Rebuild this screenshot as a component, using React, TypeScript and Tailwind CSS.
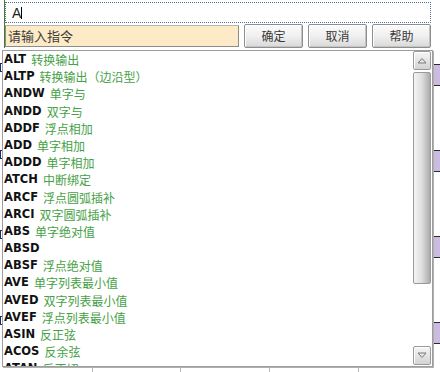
import React from "react";

const items: [string, string][] = [
  ["ALT", "转换输出"],
  ["ALTP", "转换输出（边沿型）"],
  ["ANDW", "单字与"],
  ["ANDD", "双字与"],
  ["ADDF", "浮点相加"],
  ["ADD", "单字相加"],
  ["ADDD", "单字相加"],
  ["ATCH", "中断绑定"],
  ["ARCF", "浮点圆弧插补"],
  ["ARCI", "双字圆弧插补"],
  ["ABS", "单字绝对值"],
  ["ABSD", ""],
  ["ABSF", "浮点绝对值"],
  ["AVE", "单字列表最小值"],
  ["AVED", "双字列表最小值"],
  ["AVEF", "浮点列表最小值"],
  ["ASIN", "反正弦"],
  ["ACOS", "反余弦"],
  ["ATAN", "反正切"],
];

function Btn({ label }: { label: string }) {
  return (
    <div className="w-[59px] h-[24px] flex items-center justify-center border border-[#8e8e8e] rounded-[2px] bg-linear-to-b from-[#fbfbfb] via-[#f0f0f0] to-[#d9d9d9] shadow-[inset_1px_1px_0_#ffffff,inset_-1px_-1px_0_#c4c4c4] text-[12px] text-[#3a3a3a] font-['Noto_Sans_CJK_SC',sans-serif]">
      {label}
    </div>
  );
}

function Arrow({ up }: { up: boolean }) {
  return (
    <div className="h-[19px] w-[18px] flex items-center justify-center border border-[#9a9a9a] rounded-[2px] bg-linear-to-b from-[#f6f6f6] to-[#d3d3d3] shadow-[inset_1px_1px_0_#ffffff]">
      <svg width="10" height="7" viewBox="0 0 10 7">
        {up ? (
          <polygon points="1,6 5,1.5 9,6" fill="#e6e6e6" stroke="#7a7a7a" strokeWidth="1" />
        ) : (
          <polygon points="1,1 5,5.5 9,1" fill="#e6e6e6" stroke="#7a7a7a" strokeWidth="1" />
        )}
      </svg>
    </div>
  );
}

export default function App() {
  return (
    <div className="w-[440px] h-[372px] bg-white flex overflow-hidden font-['Liberation_Sans',sans-serif]">
      {/* left edge marks */}
      <div className="w-[2px] flex flex-col shrink-0">
        <div className="mt-[63px] h-[9px] w-[2px] border-y border-l border-[#1c2a70]" />
        <div className="mt-[78px] h-[9px] w-[2px] border-y border-l border-[#1c2a70]" />
        <div className="mt-[71px] h-[9px] w-[2px] border-y border-l border-[#1c2a70]" />
        <div className="mt-[77px] h-[9px] w-[2px] border-y border-l border-[#1c2a70]" />
      </div>

      {/* middle */}
      <div className="w-[432px] flex flex-col shrink-0">
        <div className="h-[50px] flex">
          <div className="w-[2px]" />
          <div className="w-[1px] h-[48px] bg-[#3f7f2e]" />
          <div className="w-[426px] flex flex-col pt-[2px]">
            <div className="h-[21px] border border-dotted border-[#4f6f9f] flex items-center pl-[6px]">
              <span className="text-[14px] text-[#222] leading-none">A</span>
              <span className="w-[1px] h-[12px] bg-black ml-[0px]" />
            </div>
            <div className="mt-[1px] h-[24px] flex items-center">
              <div className="w-[234px] h-[22px] bg-[#fdeac6] border border-[#8c8c8c] border-t-[#b5b5b5] flex items-center pl-[2px] text-[13px] text-[#3c3c3c] font-['Noto_Sans_CJK_SC',sans-serif]">
                请输入指令
              </div>
              <div className="ml-[5px] flex gap-[5px]">
                <Btn label="确定" />
                <Btn label="取消" />
                <Btn label="帮助" />
              </div>
            </div>
          </div>
        </div>

        {/* list */}
        <div className="h-[317px] w-[431px] border border-[#9d9d9d] shadow-[1px_1px_0_#b0b0b0] flex bg-white">
          <div className="flex-1 overflow-hidden pl-[1px]">
            {items.map(([k, v]) => (
              <div key={k} className="h-[17.2px] leading-[17.2px] whitespace-nowrap flex items-center">
                <span className="font-bold text-[11.5px] text-[#111] font-['DejaVu_Sans',sans-serif]">{k}</span>
                {v && (
                  <span className="ml-[5px] text-[12px] text-[#45a145] font-['Noto_Sans_CJK_SC',sans-serif]">
                    {v}
                  </span>
                )}
              </div>
            ))}
          </div>
          <div className="w-[18px] mr-[1px] flex flex-col pb-[1px]">
            <Arrow up />
            <div className="mt-[2px] h-[212px] border border-[#9a9a9a] rounded-[2px] bg-linear-to-r from-[#f3f3f3] via-[#dedede] to-[#ababab]" />
            <div className="flex-1" />
            <Arrow up={false} />
          </div>
        </div>

        {/* bottom strip */}
        <div className="h-[5px] flex">
          <div className="ml-[90px] w-[1px] h-[5px] bg-[#b8b8b8]" />
          <div className="ml-[87px] w-[1px] h-[5px] bg-[#b8b8b8]" />
          <div className="ml-[88px] w-[1px] h-[5px] bg-[#b8b8b8]" />
          <div className="ml-[88px] w-[1px] h-[5px] bg-[#b8b8b8]" />
        </div>
      </div>

      {/* right edge */}
      <div className="w-[6px] flex flex-col shrink-0">
        <div className="mt-[64px] h-[22px] bg-[#cbbbe0] border-y border-[#2a2a2a]" />
        <div className="mt-[64px] h-[22px] bg-[#cbbbe0] border-y border-[#2a2a2a]" />
        <div className="mt-[64px] h-[22px] bg-[#cbbbe0] border-y border-[#2a2a2a]" />
        <div className="mt-[64px] h-[22px] bg-[#cbbbe0] border-y border-[#2a2a2a]" />
      </div>
    </div>
  );
}
